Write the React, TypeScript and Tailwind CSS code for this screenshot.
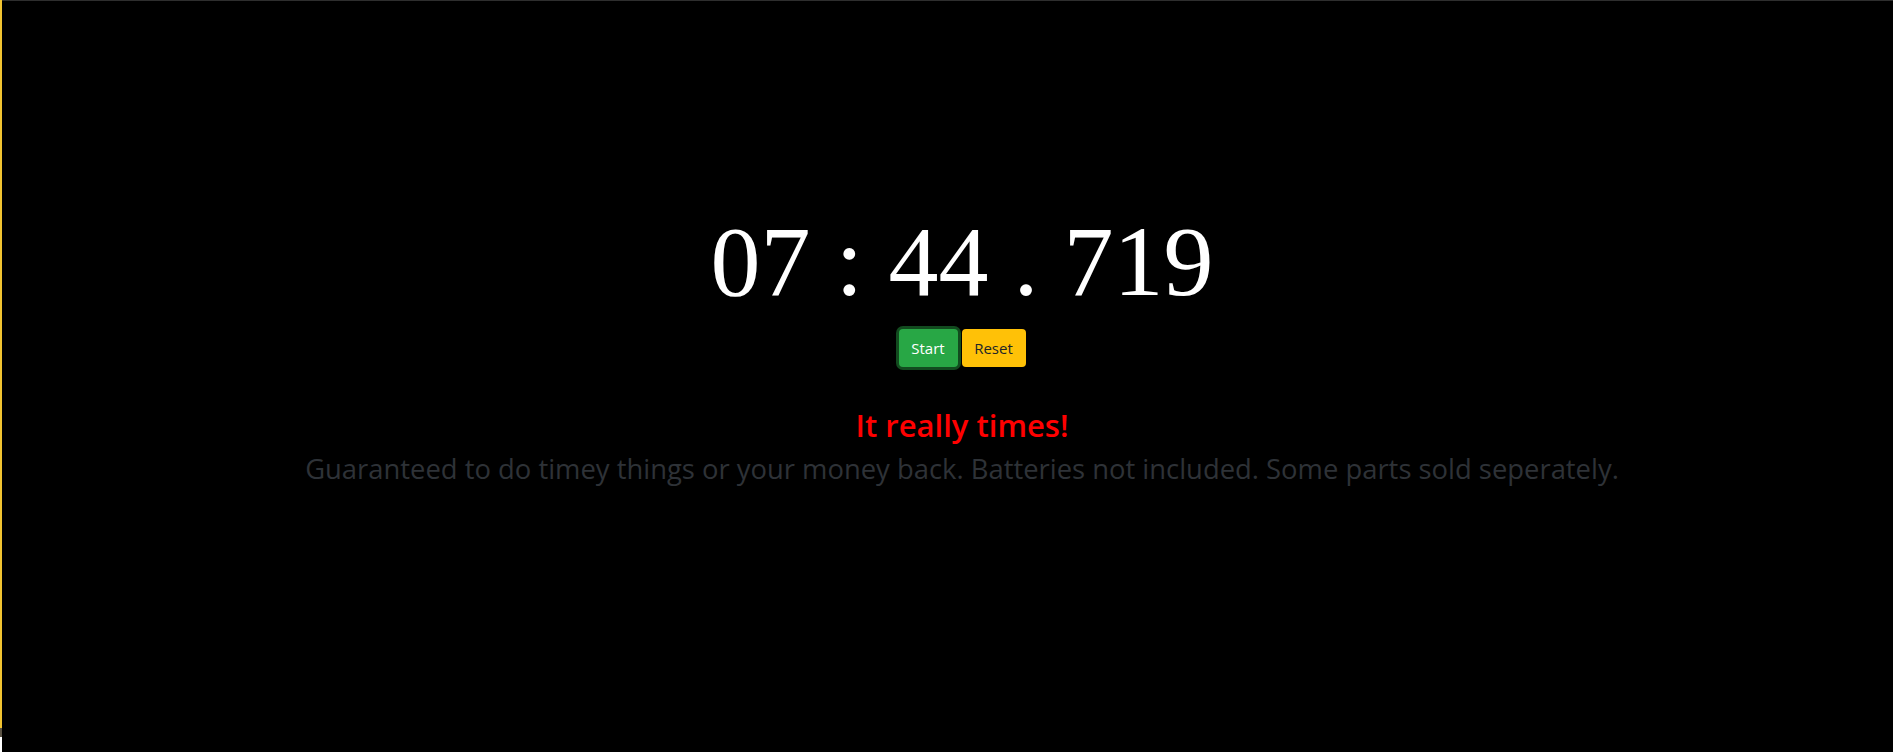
import React, { useState } from 'react';

const sans = "font-['Open_Sans','Noto_Sans',sans-serif]";

export default function App() {
  const [running, setRunning] = useState(false);

  return (
    <div className="flex h-[752px] w-full overflow-hidden bg-black">
      {/* window edge on the left */}
      <div className="flex w-[2px] flex-col">
        <div className="flex-1 bg-[#f2c431]" />
        <div className="h-[9px] bg-[#5b5344]" />
        <div className="h-[15px] bg-white" />
      </div>

      <main className="flex flex-1 flex-col items-center border-t border-[#2e2e2e] pl-[29px] pt-[211px]">
        <div className="font-['Liberation_Serif','Times_New_Roman',serif] text-[100px] leading-[100px] text-white">
          07 : 44 . 719
        </div>

        <div className={`mt-[17px] flex gap-[4px] ${sans}`}>
          <button
            onClick={() => setRunning(!running)}
            className="h-[38px] w-[59px] rounded-[4px] bg-[#28a745] text-[15px] text-white shadow-[0_0_0_3px_rgba(40,167,69,0.45)]"
          >
            {running ? 'Stop' : 'Start'}
          </button>
          <button className="h-[38px] w-[64px] rounded-[4px] bg-[#ffc107] text-[15px] text-[#212529]">
            Reset
          </button>
        </div>

        <h3 className={`mt-[38px] text-[31px] leading-[40px] font-semibold text-[#ff0000] ${sans}`}>
          It really times!
        </h3>
        <p className={`mt-[6px] text-[27.4px] leading-[36px] text-[#2e3237] ${sans}`}>
          Guaranteed to do timey things or your money back. Batteries not included. Some parts sold seperately.
        </p>
      </main>
    </div>
  );
}
